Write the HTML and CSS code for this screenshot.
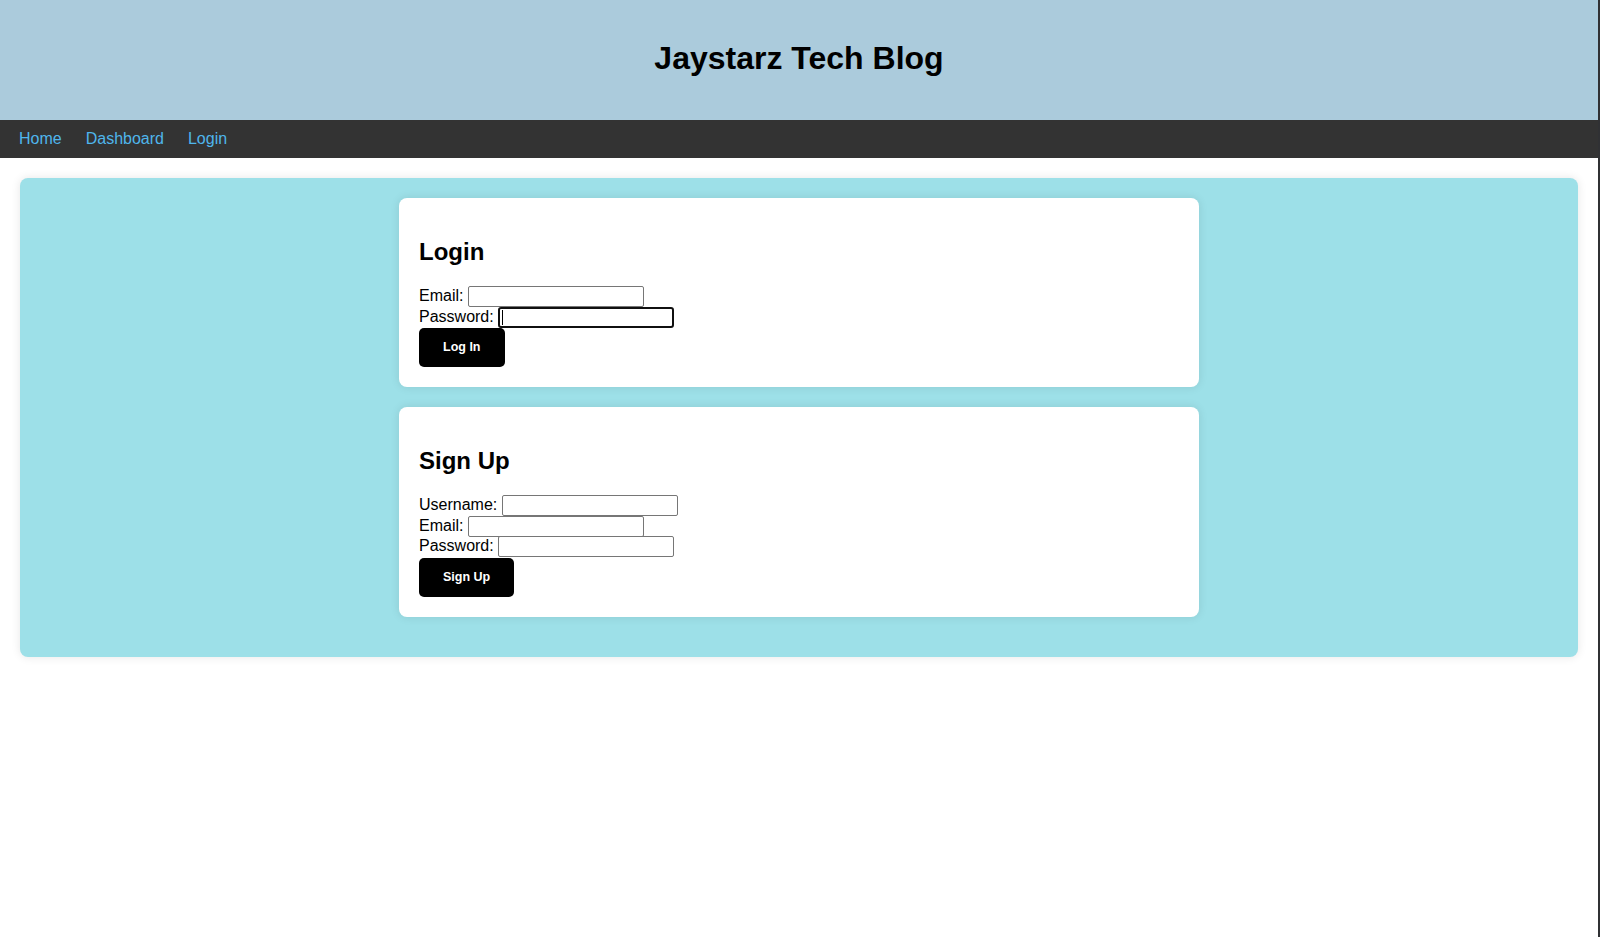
FILE: index.html
```html
<!DOCTYPE html>
<html lang="en">
<head>
<meta charset="utf-8">
<title>Jaystarz Tech Blog</title>
<link rel="stylesheet" href="styles.css">
</head>
<body>
<div class="page">
  <header class="site-header">
    <h1 class="site-title">Jaystarz Tech Blog</h1>
  </header>
  <nav class="site-nav">
    <a href="#" class="nav-link">Home</a>
    <a href="#" class="nav-link">Dashboard</a>
    <a href="#" class="nav-link">Login</a>
  </nav>
  <main class="main">
    <section class="card">
      <h2 class="card-title">Login</h2>
      <form class="form">
        <div class="row"><label>Email: <input type="text" class="field"></label></div>
        <div class="row"><label>Password: <span class="focus-wrap"><input type="password" class="field field-focused"></span></label></div>
        <button type="button" class="btn">Log In</button>
      </form>
    </section>
    <section class="card">
      <h2 class="card-title">Sign Up</h2>
      <form class="form">
        <div class="row"><label>Username: <input type="text" class="field"></label></div>
        <div class="row"><label>Email: <input type="text" class="field"></label></div>
        <div class="row"><label>Password: <input type="password" class="field"></label></div>
        <button type="button" class="btn">Sign Up</button>
      </form>
    </section>
  </main>
</div>
</body>
</html>
```
FILE: styles.css
```css
html, body {
  margin: 0;
  padding: 0;
  background: #ffffff;
}
body {
  font-family: "Liberation Sans", Arial, sans-serif;
  color: #000;
}
.page {
  width: 1600px;
  min-height: 937px;
  box-sizing: border-box;
  border-right: 2px solid #303134;
}
.site-header {
  background: #abcbdc;
  height: 120px;
  box-sizing: border-box;
  padding-top: 40px;
  text-align: center;
}
.site-title {
  margin: 0;
  font-size: 32px;
  font-weight: bold;
  line-height: 37px;
}
.site-nav {
  background: #333333;
  height: 38px;
  display: flex;
  align-items: center;
  gap: 24px;
  padding: 0 19px;
}
.nav-link {
  color: #4fb6ec;
  text-decoration: none;
  font-size: 16px;
  line-height: 18px;
}
.main {
  background: #9de0e8;
  margin: 20px;
  padding: 20px;
  border-radius: 8px;
  box-shadow: 0 0 10px rgba(0, 0, 0, 0.1);
}
.card {
  width: 800px;
  box-sizing: border-box;
  margin: 0 auto 20px;
  background: #ffffff;
  border-radius: 8px;
  padding: 20px;
  box-shadow: 0 0 10px rgba(0, 0, 0, 0.1);
}
.card-title {
  font-size: 24px;
  font-weight: bold;
  margin: 20px 0 21px;
  line-height: 27px;
}
.form {
  margin: 0;
}
.row {
  font-size: 16px;
  line-height: 18px;
  height: 20.5px;
}
.field {
  width: 176px;
  height: 21px;
  box-sizing: border-box;
  border: 1px solid #767676;
  border-radius: 2px;
  padding: 1px 2px;
  font-size: 13.33px;
  font-family: "Liberation Sans", Arial, sans-serif;
  vertical-align: baseline;
  margin: 0;
  background: #fff;
}
.focus-wrap {
  position: relative;
  display: inline-block;
}
.focus-wrap::after {
  content: "";
  position: absolute;
  left: 4px;
  top: 3px;
  width: 1px;
  height: 15px;
  background: #000;
}
.field-focused {
  border: 2px solid #101010;
  border-radius: 3px;
}
.btn {
  display: block;
  margin-top: 1px;
  background: #000;
  color: #fff;
  border: 0;
  border-radius: 5px;
  padding: 12px 24px;
  font-family: "Liberation Sans", Arial, sans-serif;
  font-size: 12.5px;
  font-weight: bold;
  line-height: 15px;
  cursor: pointer;
}
```
